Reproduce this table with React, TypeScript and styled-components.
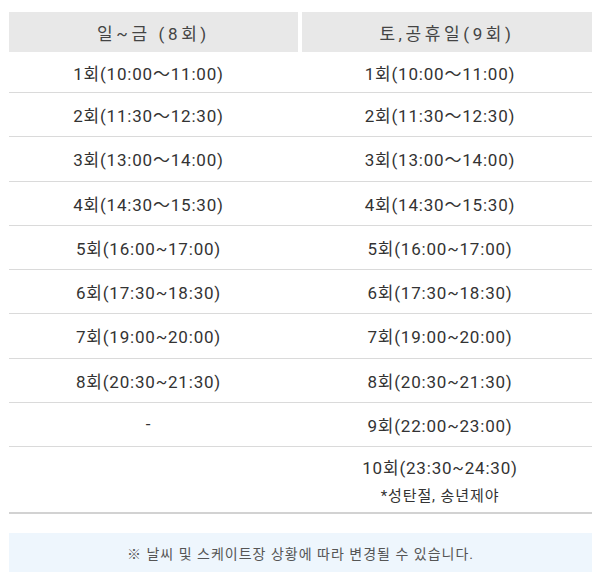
import React from 'react'
import styled, { createGlobalStyle } from 'styled-components'

// 운영 시간표: 평일 / 주말 회차 + 안내 문구

const GlobalStyle = createGlobalStyle`
  html, body {
    margin: 0;
    padding: 0;
    background: #fff;
  }
  body {
    font-family: Roboto, "Noto Sans CJK KR", sans-serif;
    color: #333;
  }
`;

const Wrapper = styled.div`
  width: 583px;
  padding: 12px 8px 0 9px;
`;

const HeaderRow = styled.div`
  display: grid;
  grid-template-columns: 289px 290px;
  column-gap: 4px;
`;

const HeaderCell = styled.div`
  height: 40px;
  display: flex;
  align-items: center;
  justify-content: center;
  background: #e8e8e8;
  font-size: 17px;
  letter-spacing: 3.6px;
  color: #444;
`;

const Row = styled.div<{ $height: number; $last?: boolean }>`
  display: grid;
  grid-template-columns: 291px 292px;
  height: ${p => p.$height}px;
  border-bottom: ${p => (p.$last ? '2px solid #d2d2d2' : '1px solid #dadada')};
  box-sizing: border-box;
`;

const Cell = styled.div`
  display: flex;
  flex-direction: column;
  align-items: center;
  justify-content: center;
  padding-right: 12px;
  font-size: 17px;
  letter-spacing: 0.8px;
  color: #333;
`;

const SubNote = styled.div`
  font-size: 15px;
  letter-spacing: 0.9px;
  margin-top: 5px;
  color: #333;
`;

const Notice = styled.div`
  margin-top: 19px;
  height: 39px;
  display: flex;
  align-items: center;
  justify-content: center;
  background: #eef6fd;
  font-size: 14px;
  letter-spacing: 1px;
  color: #555;
`;

const rows: [string, string][] = [
  ['1회(10:00～11:00)', '1회(10:00～11:00)'],
  ['2회(11:30～12:30)', '2회(11:30～12:30)'],
  ['3회(13:00～14:00)', '3회(13:00～14:00)'],
  ['4회(14:30～15:30)', '4회(14:30～15:30)'],
  ['5회(16:00~17:00)', '5회(16:00~17:00)'],
  ['6회(17:30~18:30)', '6회(17:30~18:30)'],
  ['7회(19:00~20:00)', '7회(19:00~20:00)'],
  ['8회(20:30~21:30)', '8회(20:30~21:30)'],
  ['-', '9회(22:00~23:00)'],
];

const App: React.FC = () => {
  return (
    <Wrapper>
      <GlobalStyle />
      <HeaderRow>
        <HeaderCell>일~금 (8회)</HeaderCell>
        <HeaderCell>토,공휴일(9회)</HeaderCell>
      </HeaderRow>
      {rows.map(([weekday, weekend], i) => (
        <Row key={i} $height={i === 0 ? 41 : 44.25}>
          <Cell>{weekday}</Cell>
          <Cell>{weekend}</Cell>
        </Row>
      ))}
      <Row $height={67} $last>
        <Cell />
        <Cell>
          10회(23:30~24:30)
          <SubNote>*성탄절, 송년제야</SubNote>
        </Cell>
      </Row>
      <Notice>※ 날씨 및 스케이트장 상황에 따라 변경될 수 있습니다.</Notice>
    </Wrapper>
  )
}

export default App
